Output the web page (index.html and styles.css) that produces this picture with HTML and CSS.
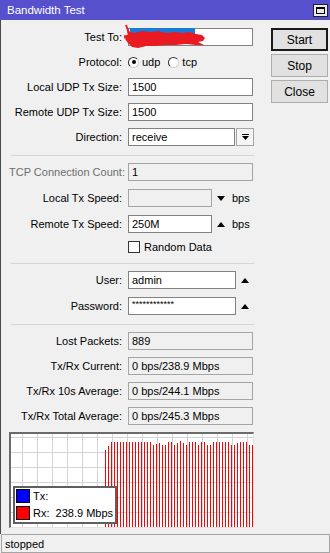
FILE: index.html
```html
<!DOCTYPE html>
<html>
<head>
  <meta charset="UTF-8">
  <title>Bandwidth Test</title>
  <link rel="stylesheet" href="styles.css">
</head>
<body>
  <div class="window">
    <div class="titlebar">
      <span class="title">Bandwidth Test</span>
      <div class="win-btns">
        <span class="win-btn"><span class="max-box"></span></span>
        <span class="win-btn">
          <svg width="9" height="9" viewBox="0 0 9 9"><path d="M1 1 L8 8 M8 1 L1 8" stroke="#000" stroke-width="2"/></svg>
        </span>
      </div>
    </div>

    <div class="content">
      <div class="form">
        <div class="section">
          <div class="row">
            <label>Test To:</label>
            <div class="field"></div>
          </div>
          <div class="row">
            <label>Protocol:</label>
            <span class="radio checked"></span><span class="opt">udp</span>
            <span class="radio"></span><span class="opt">tcp</span>
          </div>
          <div class="row">
            <label>Local UDP Tx Size:</label>
            <div class="field">1500</div>
          </div>
          <div class="row">
            <label>Remote UDP Tx Size:</label>
            <div class="field">1500</div>
          </div>
          <div class="row">
            <label>Direction:</label>
            <div class="field select">receive</div>
            <span class="drop-btn">
              <svg width="7" height="7" viewBox="0 0 7 7"><rect x="0" y="0" width="7" height="1" fill="#000"/><polygon points="0,2 7,2 3.5,6" fill="#000"/></svg>
            </span>
          </div>
        </div>

        <div class="sep"></div>

        <div class="section wide">
          <div class="row">
            <label class="dim">TCP Connection Count:</label>
            <div class="field off">1</div>
          </div>
          <div class="row">
            <label>Local Tx Speed:</label>
            <div class="field off short"></div>
            <span class="tri down"></span>
            <span class="unit">bps</span>
          </div>
          <div class="row">
            <label>Remote Tx Speed:</label>
            <div class="field short">250M</div>
            <span class="tri up"></span>
            <span class="unit">bps</span>
          </div>
          <div class="row check-row">
            <label></label>
            <span class="checkbox"></span>
            <span class="opt">Random Data</span>
          </div>
        </div>

        <div class="sep"></div>

        <div class="section wide">
          <div class="row">
            <label>User:</label>
            <div class="field mid">admin</div>
            <span class="tri up"></span>
          </div>
          <div class="row">
            <label>Password:</label>
            <div class="field mid pass">************</div>
            <span class="tri up"></span>
          </div>
        </div>

        <div class="sep"></div>

        <div class="section">
          <div class="row">
            <label>Lost Packets:</label>
            <div class="field off">889</div>
          </div>
          <div class="row">
            <label>Tx/Rx Current:</label>
            <div class="field off">0 bps/238.9 Mbps</div>
          </div>
          <div class="row">
            <label>Tx/Rx 10s Average:</label>
            <div class="field off">0 bps/244.1 Mbps</div>
          </div>
          <div class="row">
            <label>Tx/Rx Total Average:</label>
            <div class="field off">0 bps/245.3 Mbps</div>
          </div>
        </div>

        <div class="graph">
          <svg id="chart" width="242" height="93"></svg>
          <div class="legend">
            <div class="legend-row"><span class="swatch tx"></span><span>Tx:</span></div>
            <div class="legend-row"><span class="swatch rx"></span><span>Rx:&nbsp; 238.9 Mbps</span></div>
          </div>
        </div>
      </div>

      <div class="actions">
        <button class="default">Start</button>
        <button>Stop</button>
        <button>Close</button>
      </div>
    </div>

    <div class="status">stopped</div>

    <!-- scribbled-out address over the Test To field -->
    <svg class="redact" width="90" height="26" viewBox="0 0 90 26">
      <rect x="10" y="4" width="65" height="7" fill="#1a7ad8"/>
      <polygon fill="#ea1a22" points="7,7 14,9 22,7 30,8 38,7 46,9 54,8 62,9 70,8 76,10 82,11 85,14 83,17 78,18 84,21 76,21 66,20 56,21 46,21 36,22 26,22 18,24 12,23 8,19 5,15 8,12"/>
      <path d="M6 1 L9 9" stroke="#ea1a22" stroke-width="2" fill="none"/>
      <path d="M4 13 L10 12" stroke="#ea1a22" stroke-width="3" fill="none"/>
    </svg>
  </div>

  <script>
    var svgNS = "http://www.w3.org/2000/svg";
    var chart = document.getElementById("chart");

    // grid, 15px cells
    for (var gx = 11; gx < 242; gx += 15) {
      var v = document.createElementNS(svgNS, "rect");
      v.setAttribute("x", gx); v.setAttribute("y", 0);
      v.setAttribute("width", 1); v.setAttribute("height", 93);
      v.setAttribute("fill", "#d4d4d4");
      chart.appendChild(v);
    }
    for (var gy = 3; gy < 93; gy += 15) {
      var h = document.createElementNS(svgNS, "rect");
      h.setAttribute("x", 0); h.setAttribute("y", gy);
      h.setAttribute("width", 242); h.setAttribute("height", 1);
      h.setAttribute("fill", "#d4d4d4");
      chart.appendChild(h);
    }

    // rx samples: top of each bar, in window pixels
    var tops = [450, 446,
      442, 442, 442, 442, 442, 442, 442, 442, 442, 442, 442, 442, 442, 442,
      445, 444, 443, 445, 445, 442, 442, 445, 443, 441, 443, 445, 442, 442,
      442, 445, 442, 442, 445, 445, 442, 442, 442, 442, 442, 442, 445, 445,
      443, 442, 442, 442, 445, 445];
    for (var i = 0; i < tops.length; i++) {
      var b = document.createElementNS(svgNS, "rect");
      var y = tops[i] - 434;
      b.setAttribute("x", 94 + i * 3); b.setAttribute("y", y);
      b.setAttribute("width", 1); b.setAttribute("height", 93 - y);
      b.setAttribute("fill", "#ff0000");
      chart.appendChild(b);
    }
  </script>
</body>
</html>
```

FILE: styles.css
```css
body {
  margin: 0;
  background-color: #f0f0f0;
  font-family: "Liberation Sans", Arial, sans-serif;
  font-size: 11px;
  color: #000;
}
.window {
  position: relative;
  width: 330px;
  height: 553px;
  display: flex;
  flex-direction: column;
  overflow: hidden;
}
.titlebar {
  height: 20px;
  background-color: #5650cc;
  color: white;
  display: flex;
  align-items: center;
  justify-content: space-between;
  padding-left: 7px;
  flex-shrink: 0;
}
.title {
  font-size: 11.5px;
}
.win-btns {
  display: flex;
  gap: 2px;
  margin-right: -15px;
}
.win-btn {
  width: 15px;
  height: 13px;
  background-color: #eaeaea;
  border: 1px solid #222;
  display: flex;
  align-items: center;
  justify-content: center;
  box-sizing: border-box;
}
.max-box {
  width: 9px;
  height: 7px;
  box-sizing: border-box;
  border: 1px solid #000;
  border-top-width: 2px;
}
.content {
  flex: 1;
  display: flex;
  border-left: 1px solid #4a4a4a;
  padding: 8px 0 0 8px;
}
.form {
  width: 245px;
}
.section {
  display: flex;
  flex-direction: column;
  gap: 7px;
}
.section.wide {
  gap: 8px;
}
.row {
  display: flex;
  align-items: center;
  height: 18px;
}
.row label {
  width: 113px;
  margin-right: 6px;
  text-align: right;
  white-space: nowrap;
}
.row label.dim {
  color: #6d6d6d;
}
.field {
  width: 125px;
  height: 18px;
  box-sizing: border-box;
  border: 1px solid #828282;
  background-color: #fff;
  padding: 0 3px;
  line-height: 16px;
  white-space: nowrap;
  overflow: hidden;
}
.field.off {
  background-color: #f0f0f0;
  border-color: #a5a5a5;
}
.field.select {
  width: 107px;
}
.field.short {
  width: 84px;
}
.field.mid {
  width: 108px;
}
.field.pass {
  font-size: 9px;
  line-height: 12px;
}
.drop-btn {
  width: 18px;
  height: 18px;
  margin-left: 1px;
  box-sizing: border-box;
  border: 1px solid #a5a5a5;
  background-color: #f5f5f5;
  display: flex;
  align-items: center;
  justify-content: center;
}
.radio {
  width: 11px;
  height: 11px;
  box-sizing: border-box;
  border-radius: 50%;
  border: 1px solid #333;
  border-right-color: #cfcfcf;
  border-bottom-color: #cfcfcf;
  background-color: #fff;
  display: flex;
  align-items: center;
  justify-content: center;
}
.radio.checked::after {
  content: "";
  width: 4px;
  height: 4px;
  border-radius: 50%;
  background-color: #000;
}
.opt {
  margin-left: 3px;
  margin-right: 8px;
}
.tri {
  width: 0;
  height: 0;
  margin-left: 5px;
  border-left: 4.5px solid transparent;
  border-right: 4.5px solid transparent;
}
.tri.down {
  border-top: 5px solid #000;
}
.tri.up {
  border-bottom: 5px solid #000;
}
.unit {
  margin-left: 7px;
}
.check-row {
  height: 14px;
  margin-top: -1px;
}
.checkbox {
  width: 12px;
  height: 12px;
  box-sizing: border-box;
  border: 1px solid #333;
  background-color: #fff;
}
.check-row .opt {
  margin-left: 4px;
}
.sep {
  height: 1px;
  background-color: #d5d5d5;
  margin: 9px 0 7px 2px;
  width: 243px;
}
.graph {
  position: relative;
  margin-top: 7px;
  width: 245px;
  height: 96px;
  box-sizing: border-box;
  border-top: 2px solid #6b6b6b;
  border-left: 2px solid #6b6b6b;
  border-right: 1px solid #e3e3e3;
  border-bottom: 1px solid #e3e3e3;
  background-color: #fff;
}
.graph svg {
  display: block;
}
.legend {
  position: absolute;
  left: 2px;
  top: 52px;
  width: 104px;
  height: 38px;
  box-sizing: border-box;
  border: 2px solid #5f5f5f;
  background-color: #fff;
  padding: 1px;
  display: flex;
  flex-direction: column;
  gap: 3px;
}
.legend-row {
  display: flex;
  align-items: center;
  gap: 3px;
  height: 14px;
}
.swatch {
  width: 14px;
  height: 14px;
  box-sizing: border-box;
  border: 1px solid #000;
}
.swatch.tx {
  background-color: #0000ff;
}
.swatch.rx {
  background-color: #ff0000;
}
.actions {
  margin-left: 17px;
  display: flex;
  flex-direction: column;
  gap: 3px;
}
.actions button {
  width: 57px;
  height: 23px;
  background-color: #e1e1e1;
  border: 1px solid #adadad;
  font-family: "Liberation Sans", Arial, sans-serif;
  font-size: 12px;
  color: #000;
  padding: 0;
}
.actions button.default {
  border: 2px solid #1a1a1a;
}
.status {
  height: 19px;
  flex-shrink: 0;
  box-sizing: border-box;
  border: 1px solid #a5a5a5;
  margin-left: 1px;
  padding-left: 3px;
  line-height: 18px;
}
.redact {
  position: absolute;
  left: 120px;
  top: 24px;
}
```
